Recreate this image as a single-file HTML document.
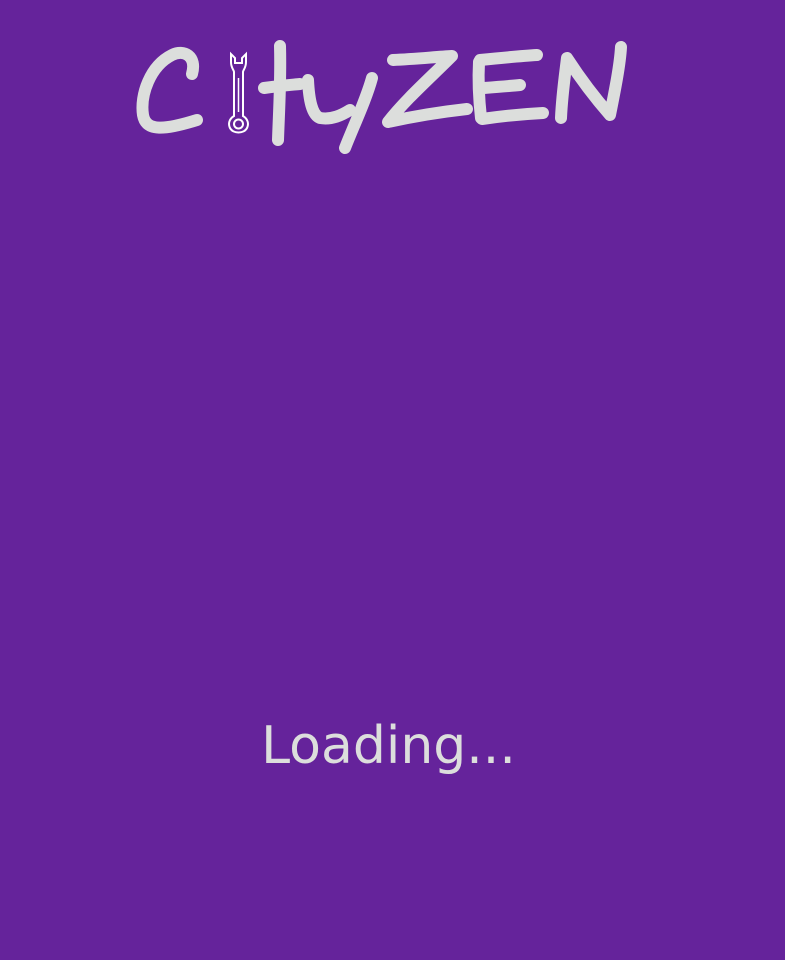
<!DOCTYPE html>
<html><head><meta charset="utf-8"><style>
html,body{margin:0;padding:0;width:785px;height:960px;background:#65239b;overflow:hidden}
.load{position:absolute;left:0;width:785px;top:716px;text-align:center;font-family:"DejaVu Sans",sans-serif;font-size:52px;color:#dcdedc;padding-right:8px;box-sizing:border-box}
svg{position:absolute;left:0;top:0}
</style></head><body>
<svg width="785" height="200" viewBox="0 0 785 200">
<g fill="none" stroke="#dcdedc" stroke-width="12" stroke-linecap="round" stroke-linejoin="round">
<path d="M192 74 C197 56 184 49 172 55 C150 66 140 95 143 115 C146 132 165 130 197 120"/>
<path d="M280 46 C281 80 279 110 278 140"/>
<path d="M264 88 C278 86 290 85 300 84"/>
<path d="M308 80 C309 100 312 115 320 118 C332 120 342 115 350 110"/>
<path d="M372 78 C366 100 354 125 345 148"/>
<path d="M393 60 C415 59 435 57 452 56 C430 78 405 100 388 122 C415 116 440 112 467 109"/>
<path d="M479 62 C478 80 479 100 481 118"/>
<path d="M480 60 C500 58 520 56 537 55"/>
<path d="M484 88 C497 87 510 86 520 85"/>
<path d="M482 119 C503 116 523 114 543 113"/>
<path d="M561 118 C562 95 565 75 567 58 C580 78 595 98 610 115 C615 90 620 65 621 47"/>
</g>
<g fill="none" stroke="#ffffff" stroke-width="2">
<path d="M231 54 L231 62 C231 68 234 70 234 72 L234 116 C229 119 228 124 230 128 C233 134 244 134 247 128 C249 124 248 119 243 116 L243 72 C243 70 246 68 246 62 L246 54 L242 58 L242 63 L235 63 L235 58 Z"/>
<circle cx="238.5" cy="124" r="4.5"/>
<path d="M238.5 78 L238.5 112" stroke-width="1.5"/>
</g>
</svg>
<div class="load">Loading...</div>
</body></html>
